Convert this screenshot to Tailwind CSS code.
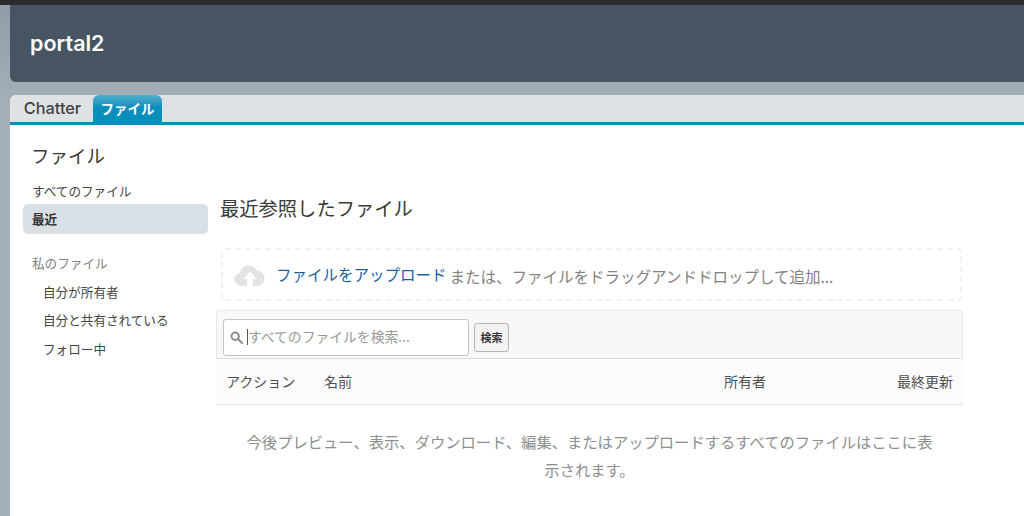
<!doctype html>
<html lang="ja">
<head>
<meta charset="utf-8">
<script src="https://cdn.jsdelivr.net/npm/@tailwindcss/browser@4"></script>
</head>
<body class="m-0 overflow-hidden">
<div class="flex h-[516px] w-[1024px] flex-col overflow-hidden bg-gradient-to-b from-[#8f9ca6] to-[#a5b0b8] to-[110px] font-['Noto_Sans_CJK_JP','Noto_Sans',sans-serif] text-[#454545]">
  <div class="h-[5px] shrink-0 bg-[#2b2b2b]"></div>
  <div class="ml-[10px] flex h-[77px] shrink-0 items-center rounded-bl-[6px] bg-[#465561] pl-[20px]">
    <span class="font-['Inter',sans-serif] text-[21.5px] font-semibold leading-none text-white">portal2</span>
  </div>
  <div class="ml-[10px] mt-[13px] flex min-h-0 flex-1 flex-col overflow-hidden rounded-tl-[6px] bg-white">
    <div class="flex h-[30px] shrink-0 items-end border-b-[3px] border-[#0a8fbd] bg-[#dfe2e5]">
      <div class="flex h-[27px] w-[83px] items-center justify-center pl-[2px] font-['Inter',sans-serif] text-[16.3px] font-medium text-[#3f4347]">Chatter</div>
      <div class="flex h-[27px] w-[69px] items-center justify-center rounded-t-[6px] bg-gradient-to-b from-[#4eaecf] to-[#0a8fbd] to-[45%] pb-[1px] text-[13.5px] font-bold text-white">ファイル</div>
    </div>
    <div class="flex min-h-0 flex-1">
      <aside class="ml-[13px] w-[185px] shrink-0">
        <h2 class="mt-[17px] pl-[8px] text-[18.5px] font-normal leading-[26px] text-[#3a3a3a]">ファイル</h2>
        <div class="mt-[14px] pl-[9px] text-[12.6px] leading-[18px]">すべてのファイル</div>
        <div class="mt-[4px] flex h-[30px] items-center rounded-[5px] bg-[#d8e0e6] pl-[9px] text-[12.6px] font-bold text-[#333]">最近</div>
        <div class="mt-[20px] pl-[9px] text-[12.6px] leading-[18px] text-[#808080]">私のファイル</div>
        <ul class="mt-[11px] flex flex-col gap-[10.4px] pl-[20px] text-[12.6px] leading-[18px]">
          <li>自分が所有者</li>
          <li>自分と共有されている</li>
          <li>フォロー中</li>
        </ul>
      </aside>
      <main class="ml-[8px] w-[747px] shrink-0">
        <h1 class="mt-[70px] pl-[4px] text-[19.3px] font-normal leading-[26px] text-[#3a3a3a]">最近参照したファイル</h1>
        <div class="ml-[5px] mt-[27px] flex h-[53px] w-[741px] items-center rounded-[4px] border-2 border-dashed border-[#f2f2f2] pl-[11px] pt-[1px]">
          <svg class="h-[22px] w-[32px] shrink-0" viewBox="0 0 32 22" fill="#e2e3e4">
            <path d="M7 22a6.5 6.5 0 0 1-1.2-12.9A9 9 0 0 1 22.6 6.4 8 8 0 0 1 25 22h-6v-7h4l-7-7.5L9 15h4v7z"/>
          </svg>
          <a class="ml-[10px] text-[15.5px] leading-none text-[#1a5f9f]">ファイルをアップロード</a>
          <span class="ml-[3px] mt-[3px] text-[15.5px] leading-none text-[#828282]">または、ファイルをドラッグアンドドロップして追加...</span>
        </div>
        <div class="mt-[9px] flex h-[49px] w-[747px] items-center gap-[5px] rounded-t-[4px] border border-b-[#dddddd] border-[#e8e8e8] bg-[#f8f8f8] pl-[6px] pt-[5px]">
          <div class="flex h-[37px] w-[246px] items-center rounded-[3px] border border-[#c4c4c4] bg-white pl-[6px]">
            <svg class="h-[13px] w-[13px] shrink-0" viewBox="0 0 13 13" fill="none" stroke="#8c8c8c" stroke-width="2"><circle cx="5.2" cy="5.2" r="3.7"/><path d="M8 8l4 4" stroke-linecap="round"/></svg>
            <span class="ml-[4px] h-[16px] w-px bg-[#555]"></span>
            <span class="text-[13.8px] leading-none text-[#9a9a9a]">すべてのファイルを検索...</span>
          </div>
          <button class="flex h-[29px] w-[35px] items-center justify-center rounded-[3px] border border-[#b5b5b5] bg-[#f2f2f2] text-[11px] font-bold text-[#333]">検索</button>
        </div>
        <div class="flex h-[46px] w-[747px] items-center border-b border-[#e0e5e7] bg-[#fbfbfb] pb-[1px] text-[14px] text-[#505050]">
          <div class="w-[98px] pl-[10px]">アクション</div>
          <div class="w-[400px] pl-[10px]">名前</div>
          <div class="w-[130px] pl-[10px]">所有者</div>
          <div class="flex-1 pr-[10px] text-right">最終更新</div>
        </div>
        <p class="mx-auto mt-[22px] w-[700px] text-center text-[15.3px] leading-[28px] text-[#8e8e8e]">今後プレビュー、表示、ダウンロード、編集、またはアップロードするすべてのファイルはここに表示されます。</p>
      </main>
    </div>
  </div>
</div>
</body>
</html>
